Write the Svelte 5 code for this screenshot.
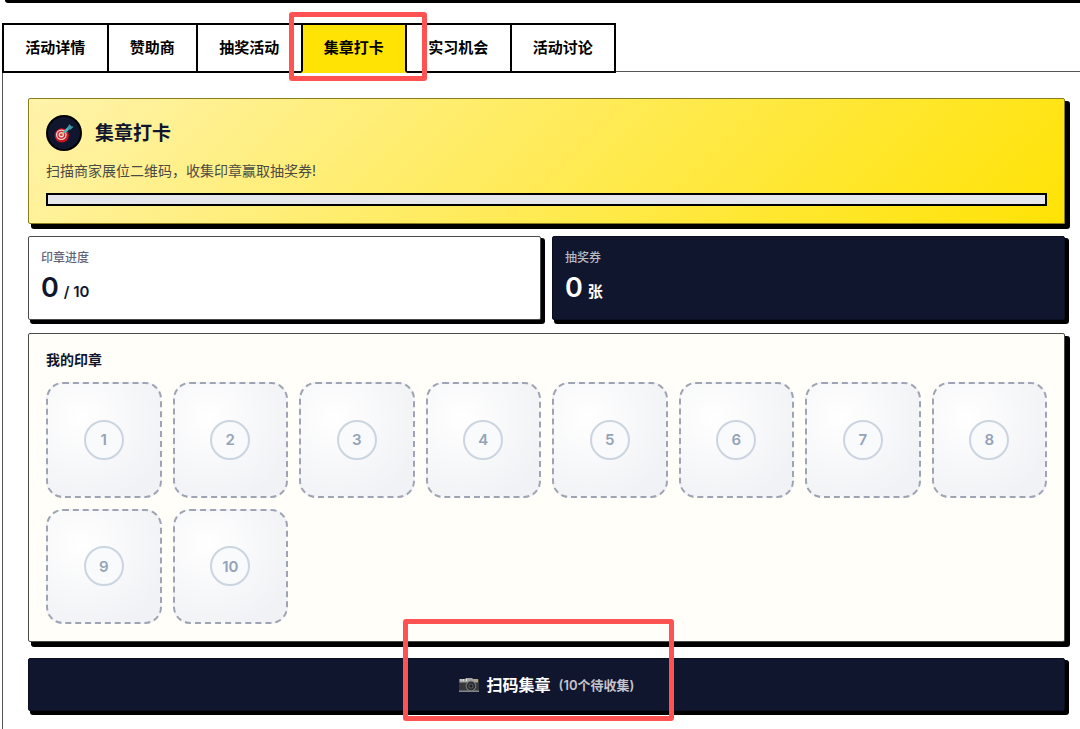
<script>
	const tabs = [
		{ id: 'detail', label: '活动详情' },
		{ id: 'sponsor', label: '赞助商' },
		{ id: 'lottery', label: '抽奖活动' },
		{ id: 'stamp', label: '集章打卡' },
		{ id: 'intern', label: '实习机会' },
		{ id: 'discuss', label: '活动讨论' }
	];

	const total = 10;

	let activeTab = $state('stamp');
	let collected = $state(0);
	let tickets = $state(0);

	let remaining = $derived(total - collected);
	let percent = $derived((collected / total) * 100);
	let stamps = $derived(Array.from({ length: total }, (_, i) => i + 1));
</script>

<div class="page">
	<div class="top-edge"></div>

	<div class="tabs" role="tablist">
		{#each tabs as tab (tab.id)}
			<button
				type="button"
				role="tab"
				class="tab"
				class:active={activeTab === tab.id}
				aria-selected={activeTab === tab.id}
				onclick={() => (activeTab = tab.id)}
			>
				{tab.label}
				{#if tab.id === 'stamp'}
					<span class="mark mark-tab"></span>
				{/if}
			</button>
		{/each}
	</div>

	<main class="panel">
		<section class="card hero">
			<div class="hero-head">
				<span class="hero-icon">
					<svg width="20" height="20" viewBox="0 0 18 18" aria-hidden="true">
						<circle cx="7" cy="11.2" r="6.4" fill="#c9151e" />
						<circle cx="6.6" cy="10.6" r="4.8" fill="#f3dcdc" />
						<circle cx="6.6" cy="10.6" r="3.7" fill="#d02a33" />
						<circle cx="6.6" cy="10.6" r="2.4" fill="#f3dcdc" />
						<circle cx="6.6" cy="10.6" r="1.2" fill="#d02a33" />
						<path d="M7 10.4 L9.4 8.2" stroke="#e8b04a" stroke-width="1.2" />
						<path d="M9 8.6 L14 3.8" stroke="#4fb4bd" stroke-width="2.4" />
						<path d="M12.2 3.6 L14.2 0.8 L15.2 2.8 L17.6 3.4 L14.8 6 L12.8 5.4 Z" fill="#3d98a6" />
					</svg>
				</span>
				<h1>集章打卡</h1>
			</div>
			<p>扫描商家展位二维码，收集印章赢取抽奖券!</p>
			<div class="progress" role="progressbar" aria-label="印章进度" aria-valuenow={collected} aria-valuemax={total}>
				<div class="progress-fill" style="width: {percent}%"></div>
			</div>
		</section>

		<div class="stats">
			<section class="stat">
				<div class="stat-label">印章进度</div>
				<div class="stat-value"><span>{collected}</span><small>/ {total}</small></div>
			</section>
			<section class="stat dark">
				<div class="stat-label">抽奖券</div>
				<div class="stat-value"><span>{tickets}</span><small>张</small></div>
			</section>
		</div>

		<section class="card collection">
			<h2>我的印章</h2>
			<div class="grid">
				{#each stamps as n (n)}
					<div class="stamp"><span>{n}</span></div>
				{/each}
			</div>
		</section>

		<button type="button" class="scan">
			<svg width="20" height="14" viewBox="0 0 20 14" aria-hidden="true">
				<rect x="0" y="1" width="20" height="13" rx="1" fill="#35373a" />
				<path d="M0.5 1 H6 L7 0 H13 L14 1 H19 V4.5 H0.5 Z" fill="#a6a6a3" />
				<path d="M2 1 V3 M4.5 1 V3 M7.5 1 V3" stroke="#e4e4e2" />
				<rect x="16" y="1.5" width="2.6" height="2" fill="#c9a557" />
				<rect x="0" y="12.5" width="20" height="1.5" fill="#85888a" />
				<circle cx="12" cy="8" r="5.4" fill="#77797b" />
				<circle cx="12" cy="8" r="4.3" fill="#292b2e" />
				<circle cx="12" cy="8" r="2.6" fill="#56595d" />
				<circle cx="12" cy="8" r="1.5" fill="#1b1d21" />
			</svg>
			<span class="scan-title">扫码集章</span>
			<span class="scan-sub">({remaining}个待收集)</span>
			<span class="mark mark-scan"></span>
		</button>
	</main>
</div>

<style>
	:global(body) {
		background: #fff;
	}

	* {
		box-sizing: border-box;
	}

	.page {
		padding-left: 2px;
		overflow: hidden;
		font-family: Inter, 'Noto Sans CJK SC', sans-serif;
		color: #11162f;
	}

	button {
		font-family: inherit;
		cursor: pointer;
	}

	.top-edge {
		height: 3px;
		margin-left: 3px;
		background: #000;
		border-bottom-left-radius: 3px;
	}

	.tabs {
		display: flex;
		width: 614px;
		margin-top: 20px;
		position: relative;
		z-index: 1;
	}

	.tab {
		position: relative;
		flex: 1 1 auto;
		height: 50px;
		padding: 0 20px;
		border: 2px solid #000;
		background: #fff;
		color: #000;
		font-size: 15px;
		font-weight: 700;
		line-height: 20px;
		white-space: nowrap;
	}

	.tab + .tab {
		margin-left: -2px;
	}

	.tab.active {
		z-index: 1;
		background: #ffe305;
		border-bottom-color: #ffe305;
	}

	.panel {
		display: flex;
		flex-direction: column;
		margin-top: -2px;
		padding: 26px 15px 24px 25px;
		border-top: 1px solid #555;
		border-left: 1px solid #555;
	}

	.card,
	.stat {
		border: 1px solid #4a4a48;
		border-radius: 2px;
	}

	.card {
		padding: 16px 17px 17px;
		box-shadow: 4px 4px 0 1px #000;
	}

	.hero {
		background: linear-gradient(135deg, #fff3ab 0%, #ffe305 100%);
		border-color: #8a7d20;
	}

	.hero-head {
		display: flex;
		align-items: center;
		gap: 13px;
	}

	.hero-icon {
		display: flex;
		align-items: center;
		justify-content: center;
		width: 36px;
		height: 36px;
		border: 2px solid #000;
		border-radius: 50%;
		background: #11162f;
	}

	h1 {
		margin: 0;
		padding-top: 2px;
		font-size: 19px;
		line-height: 28px;
		font-weight: 700;
	}

	.hero p {
		margin: 9px 0 12px;
		font-size: 14px;
		line-height: 21px;
		color: #4b4b46;
	}

	.progress {
		height: 13px;
		border: 2px solid #000;
		background: #e5e7eb;
	}

	.progress-fill {
		height: 100%;
		background: #11162f;
	}

	.stats {
		display: grid;
		grid-template-columns: 1fr 1fr;
		gap: 11px;
		margin: 12px 0 13px;
	}

	.stat {
		height: 84px;
		padding: 12px;
		background: #fff;
		box-shadow: 3px 3px 0 1px #000;
	}

	.stat.dark {
		background: #11162f;
		border-color: #0b0e20;
		color: #fff;
	}

	.stat-label {
		font-size: 12px;
		line-height: 18px;
		font-weight: 500;
		color: #63667a;
	}

	.dark .stat-label {
		color: #b8b9c1;
	}

	.stat-value {
		display: flex;
		align-items: baseline;
		gap: 5px;
		margin-top: 3px;
		font-size: 27px;
		line-height: 36px;
		font-weight: 600;
	}

	.stat-value small {
		font-size: 15px;
		line-height: 20px;
	}

	.collection {
		background: #fffef8;
	}

	h2 {
		margin: 0 0 12px;
		font-size: 14px;
		line-height: 20px;
		font-weight: 700;
	}

	.grid {
		display: grid;
		grid-template-columns: repeat(8, 1fr);
		gap: 11px;
	}

	.stamp {
		display: flex;
		align-items: center;
		justify-content: center;
		aspect-ratio: 1;
		border: 2px dashed #9fa4b4;
		border-radius: 17px;
		background: radial-gradient(circle at 30% 30%, #fff 0%, #f1f2f5 80%);
	}

	.stamp span {
		display: flex;
		align-items: center;
		justify-content: center;
		width: 40px;
		height: 40px;
		border: 2px solid #cbd5e1;
		border-radius: 50%;
		background: #f8fafc;
		color: #94a3b8;
		font-size: 15px;
		font-weight: 600;
	}

	.scan {
		position: relative;
		display: flex;
		align-items: center;
		justify-content: center;
		gap: 8px;
		height: 53px;
		margin-top: 16px;
		padding: 0;
		border: 1px solid #0b0e20;
		border-radius: 2px;
		background: #11162f;
		box-shadow: 3px 3px 0 1px #000;
		color: #fff;
	}

	.scan-title {
		font-size: 16px;
		line-height: 24px;
		font-weight: 700;
	}

	.scan-sub {
		font-size: 13px;
		line-height: 20px;
		font-weight: 600;
		color: #c4c5cc;
	}

	/* red call-out frames lying over the page */
	.mark {
		position: absolute;
		border: 5px solid #ff5252;
		border-radius: 3px;
		pointer-events: none;
	}

	.mark-tab {
		inset: -13px -22px -10px -14px;
	}

	.mark-scan {
		top: -40px;
		bottom: -11px;
		left: 50%;
		width: 271px;
		margin-left: -144px;
	}
</style>
